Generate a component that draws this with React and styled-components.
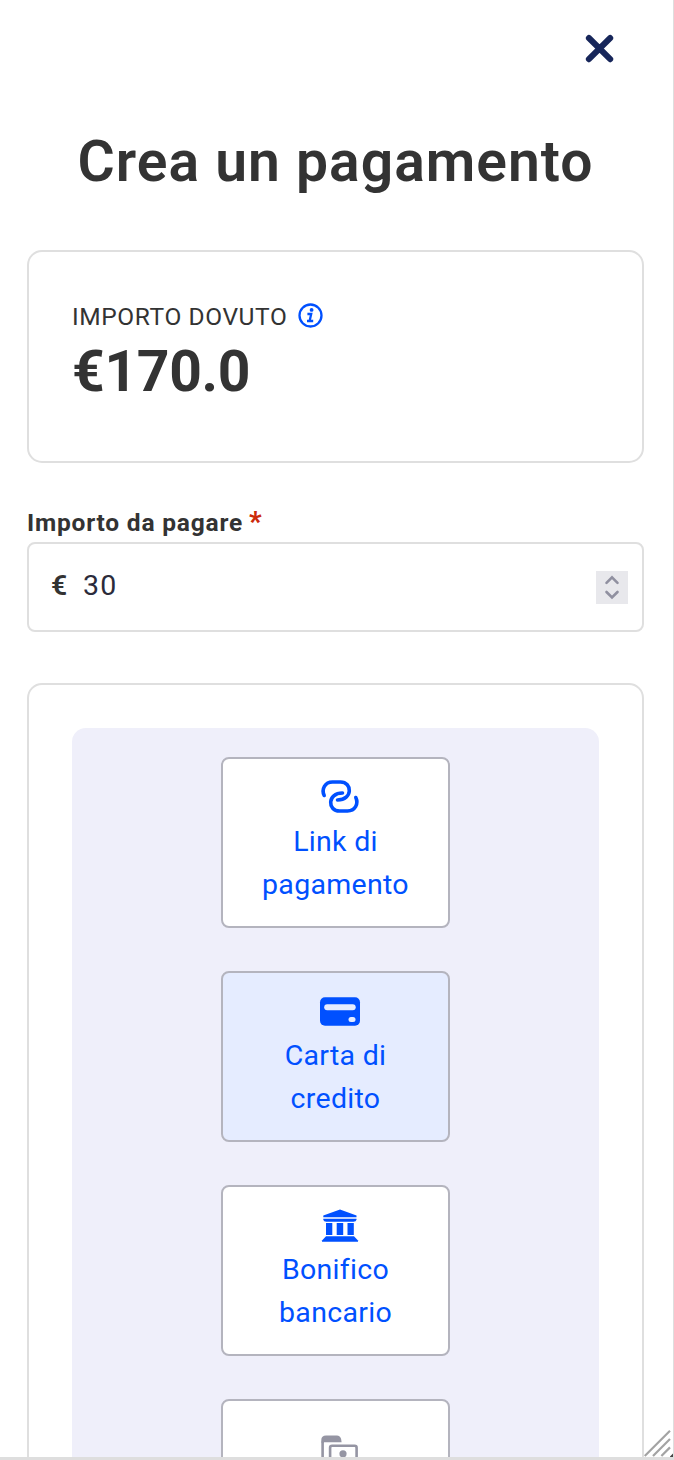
import React, { useState } from "react";
import styled, { createGlobalStyle } from "styled-components";

const GlobalStyle = createGlobalStyle`
  * {
    box-sizing: border-box;
  }
  body {
    margin: 0;
    background: #fff;
    font-family: Roboto, "Liberation Sans", sans-serif;
    color: #333;
  }
`;

const Modal = styled.div`
  position: relative;
  width: 674px;
  height: 1460px;
  padding: 0 29px 0 27px;
  border-right: 1px solid #dedede;
  border-bottom: 3px solid #dedede;
  overflow: hidden;
`;

const Header = styled.header`
  display: flex;
  justify-content: flex-end;
  padding: 34px 30px 0 0;
  height: 121px;
`;

const CloseButton = styled.button`
  display: block;
  width: 28px;
  height: 28px;
  padding: 0;
  border: 0;
  background: none;
  cursor: pointer;

  svg {
    display: block;
    overflow: visible;
  }
`;

const Title = styled.h1`
  margin: 0;
  height: 129px;
  line-height: 82px;
  font-size: 57px;
  font-weight: 600;
  letter-spacing: 1px;
  text-align: center;
  white-space: nowrap;
`;

const AmountCard = styled.section`
  height: 213px;
  padding: 46px 43px 0;
  border: 2px solid #dfdfdf;
  border-radius: 15px;
`;

const AmountLabel = styled.div`
  display: flex;
  align-items: center;
  gap: 11px;
  height: 36px;
  font-size: 24.5px;
  letter-spacing: 0.6px;

  svg {
    margin-bottom: 2px;
  }
`;

const Amount = styled.div`
  line-height: 76px;
  font-size: 57px;
  font-weight: 700;
  letter-spacing: -0.3px;
`;

const FieldLabel = styled.label`
  display: block;
  margin-top: 45px;
  height: 34px;
  line-height: 30px;
  font-size: 24.5px;
  font-weight: 700;
  letter-spacing: 0.8px;
`;

const Required = styled.span`
  margin-left: -1px;
  color: #cc2a0a;
  font-size: 27px;
  font-weight: 900;
  line-height: 1;
`;

const Field = styled.div`
  display: flex;
  align-items: center;
  height: 90px;
  padding: 0 14px 0 22px;
  border: 2px solid #dfdfdf;
  border-radius: 8px;
  font-size: 28.5px;
`;

const Currency = styled.span`
  width: 32px;
  padding-bottom: 4px;
  font-weight: 600;
`;

const AmountInput = styled.input`
  flex: 1;
  min-width: 0;
  padding: 0 0 4px;
  border: 0;
  outline: none;
  background: none;
  color: #2b2b3b;
  font: inherit;
  letter-spacing: 1.2px;
`;

const Spinner = styled.div`
  width: 32px;
  height: 33px;
  background: #e8e8ec;
`;

const Methods = styled.section`
  height: 900px;
  margin-top: 51px;
  padding: 43px 43px 0;
  border: 2px solid #dfdfdf;
  border-radius: 15px;
`;

const MethodList = styled.div`
  display: flex;
  flex-direction: column;
  align-items: center;
  gap: 43px;
  height: 900px;
  padding-top: 29px;
  border-radius: 14px;
  background: #efeffa;
`;

const Method = styled.button`
  display: flex;
  flex-direction: column;
  align-items: center;
  flex: none;
  width: 229px;
  height: 171px;
  padding: ${(props) => (props.$disabled ? "29px" : "17px")} 30px 0;
  border: 2px solid #b4b4be;
  border-radius: 8px;
  background: ${(props) => (props.$selected ? "#e5ecff" : "#fff")};
  color: #0050ff;
  font-family: inherit;
  font-size: 28.5px;
  line-height: 43.3px;
  letter-spacing: 0.3px;
  cursor: pointer;

  svg {
    display: block;
    flex: none;
    margin: 0 0 4px 8px;
  }
`;

const Grip = styled.svg`
  position: absolute;
  right: 0;
  bottom: 0;
`;

const LinkIcon = () => (
  <svg width="42" height="40" viewBox="0 0 42 40" fill="none" stroke="#0050ff" strokeWidth="3.6" strokeLinecap="round">
    <path d="M5.2 19.5C2.2 13 6 6 13.5 6H21.5C33.5 6 34 24 18.5 24" />
    <path d="M36.8 21.5C39.8 28 36 35 28.5 35H20.5C8.5 35 8 17 23.5 17" />
  </svg>
);

const CardIcon = () => (
  <svg width="42" height="40" viewBox="0 0 42 40">
    <rect x="1" y="7.3" width="40" height="28.5" rx="5" fill="#0050ff" />
    <rect x="5.2" y="14.3" width="31.5" height="6" rx="3" fill="#e5ecff" />
    <rect x="29.5" y="27" width="7" height="5" rx="2.5" fill="#e5ecff" />
  </svg>
);

const BankIcon = () => (
  <svg width="42" height="40" viewBox="0 0 42 40" fill="#0050ff">
    <path d="M21 5.5L37.5 11.5V13.2H4.3V11.5Z" />
    <path d="M4.3 14.7H37.5V15.8Q37 17.8 34.5 17.8H7.3Q4.8 17.8 4.3 15.8Z" />
    <path d="M7 19.1H13.3V31.1H7ZM17.7 19.1H24.2V31.1H17.7ZM28.5 19.1H34.8V31.1H28.5Z" />
    <path d="M7 32.3H35L39 36.5V37.8H3V36.5Z" />
  </svg>
);

const CashIcon = () => (
  <svg width="42" height="40" viewBox="0 0 42 40" fill="none" stroke="#9595a3" strokeWidth="2.6">
    <path d="M3.6 40V11.5" />
    <path d="M2.3 12.5V10Q2.3 5.5 7.1 5.5H18.1Q22.6 6 22.6 12.2H4.9V13Z" fill="#9595a3" stroke="none" />
    <rect x="11.1" y="15.8" width="26.5" height="28" rx="2" />
    <circle cx="24" cy="23.8" r="3.6" fill="#9595a3" stroke="none" />
  </svg>
);

const methods = [
  { id: "link", lines: ["Link di", "pagamento"], icon: <LinkIcon /> },
  { id: "card", lines: ["Carta di", "credito"], icon: <CardIcon /> },
  { id: "bank", lines: ["Bonifico", "bancario"], icon: <BankIcon /> },
  { id: "cash", lines: [], icon: <CashIcon />, disabled: true },
];

const App = () => {
  const [amount, setAmount] = useState("30");
  const [selected, setSelected] = useState("card");

  return (
    <>
      <GlobalStyle />
      <Modal>
        <Header>
          <CloseButton>
            <svg width="28" height="28" viewBox="0 0 28 28" fill="none" stroke="#17265a" strokeWidth="6" strokeLinecap="round">
              <path d="M2.9 4L24.2 25.2M24.2 4L2.9 25.2" />
            </svg>
          </CloseButton>
        </Header>

        <Title>Crea un pagamento</Title>

        <AmountCard>
          <AmountLabel>
            IMPORTO DOVUTO
            <svg width="25" height="25" viewBox="0 0 25 25" fill="none" stroke="#0050ff" strokeWidth="2.3">
              <circle cx="12.5" cy="12.5" r="11" />
              <circle cx="13.6" cy="6.9" r="1.9" fill="#0050ff" stroke="none" />
              <path d="M9.4 11H13.2L11.6 18H15.2M9 18H12" />
            </svg>
          </AmountLabel>
          <Amount>€170.0</Amount>
        </AmountCard>

        <FieldLabel htmlFor="amount">
          Importo da pagare <Required>*</Required>
        </FieldLabel>
        <Field>
          <Currency>€</Currency>
          <AmountInput id="amount" value={amount} onChange={(e) => setAmount(e.target.value)} />
          <Spinner>
            <svg width="32" height="33" viewBox="0 0 32 33" fill="none" stroke="#9090a0" strokeWidth="2.6" strokeLinecap="round">
              <path d="M10.5 11.8L16 6.3L21.5 11.8M10.5 21L16 26.5L21.5 21" />
            </svg>
          </Spinner>
        </Field>

        <Methods>
          <MethodList>
            {methods.map((m) => (
              <Method
                key={m.id}
                $selected={selected === m.id}
                $disabled={m.disabled}
                disabled={m.disabled}
                onClick={() => setSelected(m.id)}
              >
                {m.icon}
                {m.lines.map((line) => (
                  <span key={line}>{line}</span>
                ))}
              </Method>
            ))}
          </MethodList>
        </Methods>

        <Grip width="29" height="28" viewBox="0 0 29 28" stroke="#a3a3a3" strokeWidth="2.2">
          <path d="M0.7 27L26 1.7M9 27L26 10M17.4 27L26 18.4" />
          <path d="M26 27.5L29 24.5V28H26Z" fill="#444" stroke="none" />
        </Grip>
      </Modal>
    </>
  );
};

export default App;
